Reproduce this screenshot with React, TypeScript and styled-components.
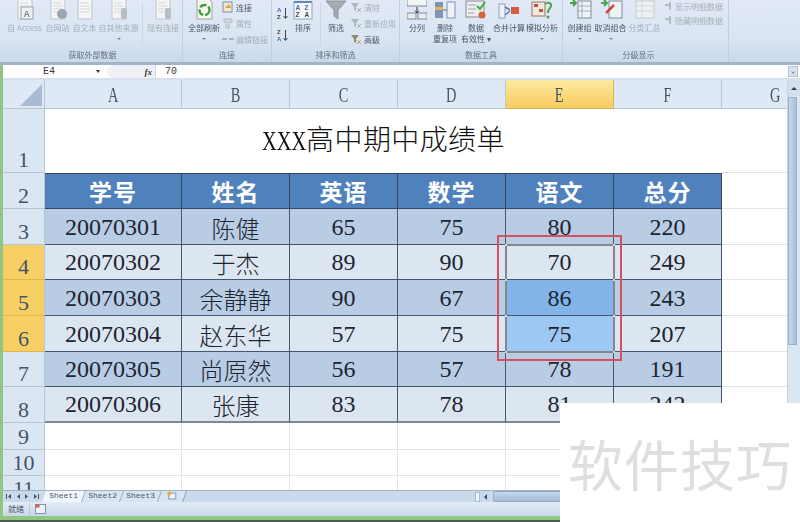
import { Fragment, ReactNode } from 'react';
import styled, { createGlobalStyle } from 'styled-components';

const GlobalStyle = createGlobalStyle`
  html, body {
    margin: 0;
    padding: 0;
    background: #fff;
  }
`;

const UI_FONT = `"Noto Sans CJK SC", "Liberation Sans", sans-serif`;
const CELL_FONT = `"Liberation Serif", "Noto Sans CJK SC", serif`;
const MONO_FONT = `"Liberation Mono", monospace`;

const COLUMNS = ['A', 'B', 'C', 'D', 'E', 'F', 'G'];
const ROW_HEIGHTS = [64, 36, 36, 35, 36, 36, 35, 36, 27, 26, 26];
const HEADINGS = ['学号', '姓名', '英语', '数学', '语文', '总分'];
const STUDENTS = [
  ['20070301', '陈健', '65', '75', '80', '220'],
  ['20070302', '于杰', '89', '90', '70', '249'],
  ['20070303', '余静静', '90', '67', '86', '243'],
  ['20070304', '赵东华', '57', '75', '75', '207'],
  ['20070305', '尚原然', '56', '57', '78', '191'],
  ['20070306', '张康', '83', '78', '81', '242'],
];

type Tone = 'odd' | 'even' | 'picked' | 'pickedLight';

const toneColors: Record<Tone, string> = {
  odd: '#b8cce4',
  even: '#dce6f1',
  picked: '#83b4e8',
  pickedLight: '#9dc8f3',
};

function toneFor(row: number, col: number): Tone {
  if (col === 4 && row === 2) return 'picked';
  if (col === 4 && row === 3) return 'pickedLight';
  return row % 2 === 0 ? 'odd' : 'even';
}

const Page = styled.div`
  position: relative;
  width: 800px;
  height: 522px;
  overflow: hidden;
  display: flex;
  flex-direction: column;
  background: #8fc684;
  font-family: ${UI_FONT};
`;

const Ribbon = styled.div`
  height: 62px;
  display: flex;
  padding-left: 3px;
  background: linear-gradient(#e0e9f5, #dbe5f2 60%, #c9d9ec);
  border-bottom: 3px solid #a3b4c9;
  filter: blur(0.35px);
  flex: none;
`;

const Group = styled.div<{ $width: number }>`
  width: ${(p) => p.$width}px;
  flex: none;
  display: flex;
  flex-direction: column;
  border-right: 1px solid #c0cfe1;
  box-sizing: border-box;
`;

const GroupBody = styled.div`
  height: 50px;
  display: flex;
  align-items: flex-start;
  overflow: hidden;
`;

const GroupLabel = styled.div<{ $shift?: number }>`
  height: 12px;
  line-height: 10px;
  font-size: 8px;
  color: #626e7c;
  text-align: center;
  padding-right: ${(p) => p.$shift ?? 0}px;
`;

const BigButton = styled.div<{ $width: number; $gap?: number; $off?: boolean }>`
  width: ${(p) => p.$width}px;
  margin-left: ${(p) => p.$gap ?? 0}px;
  flex: none;
  display: flex;
  flex-direction: column;
  align-items: center;
  text-align: center;
  font-size: 8px;
  line-height: 11px;
  white-space: nowrap;
  color: ${(p) => (p.$off ? '#a5aeb9' : '#4c5662')};

  svg {
    display: block;
    margin-bottom: 2px;
  }
`;

const Caret = styled.div`
  width: 0;
  height: 0;
  margin-top: 5px;
  border-left: 2px solid transparent;
  border-right: 2px solid transparent;
  border-top: 2px solid #7a8492;
`;

const SmallList = styled.div<{ $gap: number; $left?: number; $top?: number }>`
  display: flex;
  flex-direction: column;
  gap: ${(p) => p.$gap}px;
  margin-left: ${(p) => p.$left ?? 0}px;
  padding-top: ${(p) => p.$top ?? 1}px;
  flex: none;
`;

const SmallItem = styled.div<{ $off?: boolean }>`
  display: flex;
  align-items: center;
  gap: 2px;
  height: 12px;
  font-size: 8px;
  white-space: nowrap;
  color: ${(p) => (p.$off ? '#a5aeb9' : '#4c5662')};
`;

const Divider = styled.div<{ $left: number }>`
  width: 1px;
  height: 44px;
  margin: 2px 0 0 ${(p) => p.$left}px;
  background: #cbd7e6;
  flex: none;
`;

const FormulaBar = styled.div`
  height: 13px;
  display: flex;
  align-items: center;
  background: #fff;
  border-bottom: 2px solid #d7e0ea;
  margin-left: 3px;
  flex: none;
  font-family: ${MONO_FONT};
  font-size: 10px;
  color: #3a3a3a;
`;

const NameBox = styled.div`
  width: 101px;
  padding-left: 40px;
  box-sizing: border-box;
  display: flex;
  justify-content: space-between;
  padding-right: 4px;
  align-items: center;
`;

const DropMark = styled.span`
  width: 0;
  height: 0;
  border-left: 2px solid transparent;
  border-right: 2px solid transparent;
  border-top: 3px solid #333;
`;

const FormulaTools = styled.div`
  width: 49px;
  height: 13px;
  margin-left: 3px;
  display: flex;
  align-items: center;
  justify-content: flex-end;
  padding-right: 3px;
  box-sizing: border-box;
  background: #eef2f7;
  border-radius: 7px 0 0 7px;
  font-family: "Liberation Serif", serif;
  font-style: italic;
  font-weight: 700;
  font-size: 9px;
  border-right: 1px solid #d3dbe5;
`;

const FormulaValue = styled.div`
  flex: 1;
  padding-left: 9px;
`;

const ExpandButton = styled.div`
  width: 10px;
  height: 11px;
  margin-right: 2px;
  background: #d9e3ef;
  border: 1px solid #b4c3d6;
  box-sizing: border-box;
  color: #44546a;
  font-size: 7px;
  line-height: 8px;
  text-align: center;
`;

const Workspace = styled.div`
  flex: 1;
  min-height: 0;
  margin-left: 3px;
  display: flex;
  background: #fff;
`;

const Sheet = styled.div`
  width: 784px;
  flex: none;
  overflow: hidden;
  display: grid;
  grid-template-columns: 42px 137px repeat(6, 108px);
  grid-template-rows: 29px ${ROW_HEIGHTS.map((h) => `${h}px`).join(' ')};
`;

const Corner = styled.div`
  background: #dfe9f5;
  border-right: 1px solid #b6c6d9;
  border-bottom: 1px solid #b6c6d9;
  display: flex;
  align-items: flex-end;
  justify-content: flex-end;
  padding: 0 2px 2px 0;
`;

const ColumnHead = styled.div<{ $active?: boolean }>`
  display: flex;
  align-items: center;
  justify-content: center;
  box-sizing: border-box;
  font-family: ${CELL_FONT};
  font-size: 20px;
  padding-top: 3px;
  color: #44546a;
  background: ${(p) => (p.$active ? 'linear-gradient(#fde9a0, #f9cb5e)' : '#dfe9f5')};
  border-right: 1px solid ${(p) => (p.$active ? '#d8b45c' : '#b6c6d9')};
  border-bottom: 1px solid ${(p) => (p.$active ? '#d8b45c' : '#b6c6d9')};
`;

const ColumnLetter = styled.span`
  display: inline-block;
  transform: scaleX(0.72);
`;

const RowHead = styled.div<{ $active?: boolean }>`
  display: flex;
  align-items: flex-end;
  justify-content: center;
  box-sizing: border-box;
  font-family: ${CELL_FONT};
  font-size: 22px;
  line-height: 24px;
  color: #44546a;
  background: ${(p) => (p.$active ? '#f7cf63' : '#dbe6f3')};
  border-right: 1px solid #b6c6d9;
  border-bottom: 1px solid ${(p) => (p.$active ? '#dcb652' : '#b6c6d9')};
`;

const TitleCell = styled.div`
  grid-column: span 6;
  display: flex;
  align-items: center;
  justify-content: center;
  background: #fff;
  font-family: ${CELL_FONT};
  font-size: 28px;
  font-weight: 300;
  letter-spacing: 0.4px;
  line-height: 1;
  color: #111;
`;

const TitleLatin = styled.span`
  display: inline-block;
  width: 44px;
  transform: scaleX(0.73);
  transform-origin: left center;
  letter-spacing: 0;
`;

const HeadCell = styled.div`
  display: flex;
  align-items: center;
  justify-content: center;
  box-sizing: border-box;
  background: #4f81bd;
  color: #fff;
  font-weight: 700;
  font-size: 23px;
  letter-spacing: 1px;
  border-top: 1px solid #36465c;
  border-right: 1px solid #36465c;
  border-bottom: 1px solid #36465c;
`;

const DataCell = styled.div<{ $tone: Tone; $last?: boolean }>`
  display: flex;
  align-items: center;
  justify-content: center;
  box-sizing: border-box;
  padding-top: 1px;
  background: ${(p) => toneColors[p.$tone]};
  color: #1d2530;
  font-family: ${CELL_FONT};
  font-size: 24px;
  font-weight: 300;
  border-right: 1px solid #46566e;
  border-bottom: ${(p) => (p.$last ? '2px solid #7d8896' : '1px solid #46566e')};
`;

const EmptyCell = styled.div`
  box-sizing: border-box;
  background: #fff;
  border-right: 1px solid #e4e4e4;
  border-bottom: 1px solid #e4e4e4;
`;

const ScrollBar = styled.div`
  flex: 1;
  display: flex;
  flex-direction: column;
  align-items: stretch;
  background: #dbe6f3;
  border-left: 1px solid #c4d2e3;
`;

const ScrollCap = styled.div`
  height: 16px;
  display: flex;
  align-items: center;
  justify-content: center;
  background: #d3dfee;
  flex: none;
`;

const ScrollUp = styled.span`
  width: 0;
  height: 0;
  border-left: 3px solid transparent;
  border-right: 3px solid transparent;
  border-bottom: 3px solid #2f3f55;
`;

const ScrollThumb = styled.div`
  height: 248px;
  margin: 1px 3px 0 0;
  background: linear-gradient(90deg, #c6d7ea, #a9c1dd);
  border: 1px solid #9ab1cc;
  box-sizing: border-box;
  flex: none;
`;

const TabBar = styled.div`
  height: 11px;
  margin-left: 3px;
  display: flex;
  align-items: flex-end;
  background: #c9daec;
  border-top: 1px solid #9fb2c8;
  flex: none;
  font-family: ${MONO_FONT};
  font-size: 8px;
  color: #4c5a6c;
`;

const TabNav = styled.div`
  width: 41px;
  height: 11px;
  padding-left: 3px;
  box-sizing: border-box;
  display: flex;
  align-items: center;
  gap: 3px;
  color: #44546a;
`;

const Tab = styled.div<{ $active?: boolean; $width: number }>`
  width: ${(p) => p.$width}px;
  height: 11px;
  line-height: 10px;
  text-align: center;
  background: ${(p) => (p.$active ? '#f2f6fb' : '#d8e4f1')};
  border-right: 1px solid #8da2bb;
  transform: skewX(-20deg);
`;

const TabLabel = styled.span`
  display: inline-block;
  transform: skewX(20deg);
`;

const TabFill = styled.div`
  flex: 1;
`;

const HScroll = styled.div`
  width: 325px;
  height: 10px;
  display: flex;
  align-items: center;
  gap: 4px;
  align-self: center;
`;

const SplitHandle = styled.div`
  width: 3px;
  height: 8px;
  background: #eef3f9;
  border: 1px solid #a8bbd1;
`;

const LeftArrow = styled.span`
  width: 0;
  height: 0;
  border-top: 3px solid transparent;
  border-bottom: 3px solid transparent;
  border-right: 3px solid #3c4c62;
`;

const HThumb = styled.div`
  flex: 1;
  height: 9px;
  margin-left: 2px;
  background: linear-gradient(#c6d8ec, #a4bcd8);
  border: 1px solid #90a8c4;
  border-radius: 2px;
`;

const StatusBar = styled.div`
  height: 14px;
  margin-left: 3px;
  display: flex;
  align-items: center;
  background: linear-gradient(#e3ecf6, #c9d7e8);
  font-size: 8px;
  color: #4c5a6c;
  flex: none;
`;

const StatusText = styled.span`
  width: 27px;
  padding-left: 5px;
  box-sizing: border-box;
  border-right: 1px solid #b9c8da;
  line-height: 12px;
`;

const StatusIcon = styled.span`
  margin-left: 5px;
  display: flex;
`;

const WindowEdge = styled.div`
  height: 4px;
  background: #8fc684;
  border-bottom: 2px solid #4f5a4e;
  flex: none;
`;

const RedFrame = styled.div`
  position: absolute;
  left: 497px;
  top: 235px;
  width: 125px;
  height: 126px;
  box-sizing: border-box;
  border: 2px solid #d8505f;
`;

const SelectionFrame = styled.div`
  position: absolute;
  left: 505px;
  top: 244px;
  width: 110px;
  height: 109px;
  box-sizing: border-box;
  border: 2px solid #83888e;
`;

const Handle = styled.div<{ $x: 'left' | 'right'; $y: number }>`
  position: absolute;
  ${(p) => p.$x}: -2px;
  top: ${(p) => p.$y}px;
  width: 2px;
  height: 2px;
  background: #d9dde1;
`;

const Watermark = styled.div`
  position: absolute;
  left: 560px;
  top: 403px;
  width: 240px;
  height: 119px;
  background: #fff;
  display: flex;
  justify-content: center;
  padding-top: 24px;
  box-sizing: border-box;
  font-size: 55px;
  line-height: 70px;
  letter-spacing: 1px;
  color: #dfdfdf;
`;

const Svg = ({ w = 20, h = 20, children }: { w?: number; h?: number; children: ReactNode }) => (
  <svg width={w} height={h} viewBox={`0 0 ${w} ${h}`} fill="none">
    {children}
  </svg>
);

const PageShape = ({ stroke = '#bcc5ce' }: { stroke?: string }) => (
  <>
    <path d="M3 -4H13L17 0V19H3Z" fill="#f4f5f4" stroke={stroke} />
    <path d="M5 3H13M5 6H15M5 9H15M5 12H15" stroke="#d5d9da" />
  </>
);

const DataPage = ({ badge }: { badge?: ReactNode }) => (
  <Svg>
    <PageShape />
    {badge}
  </Svg>
);

const SortIcon = ({ up }: { up?: boolean }) => (
  <Svg w={13} h={14}>
    <text x="1" y="6" fontSize="6" fontFamily="Liberation Sans" fontWeight="700" fill={up ? '#3c69a8' : '#444'}>
      {up ? 'A' : 'Z'}
    </text>
    <text x="1" y="13" fontSize="6" fontFamily="Liberation Sans" fontWeight="700" fill={up ? '#444' : '#3c69a8'}>
      {up ? 'Z' : 'A'}
    </text>
    <path d="M9.5 2V12M7.5 10L9.5 12.5L11.5 10" stroke="#3b4652" />
  </Svg>
);

const SmallFunnel = ({ color = '#aeb6bf', mark }: { color?: string; mark?: string }) => (
  <Svg w={12} h={12}>
    <path d="M1 2H9L6 6V10L4 9V6Z" fill={color} />
    {mark && <path d="M7 7L11 11M11 7L7 11" stroke={mark} />}
  </Svg>
);

const NavIcon = ({ dir, stop }: { dir: 'left' | 'right'; stop?: boolean }) => (
  <Svg w={6} h={7}>
    <path d={dir === 'left' ? 'M5 1V6L2 3.5Z' : 'M1 1V6L4 3.5Z'} fill="#44546a" />
    {stop && <path d={dir === 'left' ? 'M0.5 1V6' : 'M5.5 1V6'} stroke="#44546a" />}
  </Svg>
);

const App = () => (
  <>
    <GlobalStyle />
    <Page>
      <Ribbon>
        <Group $width={180}>
          <GroupBody>
            <BigButton $width={35} $gap={4} $off>
              <DataPage
                badge={
                  <>
                    <rect x="6" y="7" width="12" height="12" fill="#eef1f3" stroke="#9aa4ae" />
                    <text x="8.5" y="17" fontSize="9" fontFamily="Liberation Sans" fontWeight="700" fill="#7d8894">
                      A
                    </text>
                  </>
                }
              />
              自 Access
            </BigButton>
            <BigButton $width={25} $gap={3} $off>
              <DataPage badge={<circle cx="14" cy="14" r="5" fill="#9aa6b3" />} />
              自网站
            </BigButton>
            <BigButton $width={25} $gap={2} $off>
              <DataPage />
              自文本
            </BigButton>
            <BigButton $width={39} $gap={2} $off>
              <DataPage badge={<rect x="12" y="8" width="6" height="11" rx="2" fill="#b6bfc9" />} />
              自其他来源
              <Caret />
            </BigButton>
            <Divider $left={4} />
            <BigButton $width={32} $gap={4} $off>
              <DataPage badge={<rect x="12" y="8" width="6" height="11" rx="2" fill="#b6bfc9" />} />
              现有连接
            </BigButton>
          </GroupBody>
          <GroupLabel>获取外部数据</GroupLabel>
        </Group>
        <Group $width={89}>
          <GroupBody>
            <BigButton $width={32} $gap={5}>
              <Svg w={22} h={20}>
                <path d="M4 -2H15L19 2V19H4Z" fill="#f6f7ef" stroke="#9ea79c" />
                <circle cx="11.5" cy="10" r="5" stroke="#3f9d3c" strokeWidth="2.4" strokeDasharray="7 2" />
              </Svg>
              全部刷新
              <Caret />
            </BigButton>
            <SmallList $gap={4} $left={2}>
              <SmallItem>
                <Svg w={12} h={12}>
                  <rect x="1" y="1" width="9" height="10" fill="#f1e9cf" stroke="#7e8fa8" />
                  <path d="M3 7L7 3L9 7Z" fill="#d8a83e" />
                </Svg>
                连接
              </SmallItem>
              <SmallItem $off>
                <Svg w={12} h={12}>
                  <path d="M2 2H10V5H7V11H4V5H2Z" fill="#d5dadf" stroke="#b3bbc4" />
                </Svg>
                属性
              </SmallItem>
              <SmallItem $off>
                <Svg w={12} h={12}>
                  <path d="M0 6H5M7 6H12" stroke="#aab3bd" strokeWidth="2" />
                </Svg>
                编辑链接
              </SmallItem>
            </SmallList>
          </GroupBody>
          <GroupLabel>连接</GroupLabel>
        </Group>
        <Group $width={128}>
          <GroupBody>
            <SmallList $gap={8} $left={4} $top={6}>
              <SortIcon up />
              <SortIcon />
            </SmallList>
            <BigButton $width={22} $gap={3}>
              <Svg w={20} h={20}>
                <rect x="1" y="2" width="18" height="17" fill="#f7f8fb" stroke="#8fa3bd" />
                <rect x="1" y="1" width="18" height="2" fill="#5f87bb" />
                <text x="2.5" y="10" fontSize="6.5" fontFamily="Liberation Sans" fontWeight="700" fill="#3c69a8">A</text>
                <text x="11.5" y="10" fontSize="6.5" fontFamily="Liberation Sans" fontWeight="700" fill="#3c69a8">Z</text>
                <text x="2.5" y="17" fontSize="6.5" fontFamily="Liberation Sans" fontWeight="700" fill="#444">Z</text>
                <text x="11.5" y="17" fontSize="6.5" fontFamily="Liberation Sans" fontWeight="700" fill="#444">A</text>
              </Svg>
              排序
            </BigButton>
            <Divider $left={6} />
            <BigButton $width={22} $gap={4}>
              <Svg w={20} h={20}>
                <path d="M0 1H20L12 10V19L8 16V10Z" fill="#a5abb0" stroke="#8f969c" />
              </Svg>
              筛选
            </BigButton>
            <SmallList $gap={4} $left={3}>
              <SmallItem $off>
                <SmallFunnel mark="#b8a8a8" />
                清除
              </SmallItem>
              <SmallItem $off>
                <SmallFunnel mark="#a8c0a8" />
                重新应用
              </SmallItem>
              <SmallItem>
                <SmallFunnel color="#8c8f6a" mark="#d3a33d" />
                高级
              </SmallItem>
            </SmallList>
          </GroupBody>
          <GroupLabel>排序和筛选</GroupLabel>
        </Group>
        <Group $width={163}>
          <GroupBody>
            <BigButton $width={22} $gap={6}>
              <Svg w={20} h={20}>
                <rect x="0" y="-2" width="20" height="8" fill="#f2f4f6" stroke="#7f8a96" />
                <rect x="0" y="13" width="9" height="6" fill="#e8eaec" stroke="#7f8a96" />
                <rect x="11" y="13" width="9" height="6" fill="#e8eaec" stroke="#7f8a96" />
                <path d="M10 7V13M8 10.5L10 13L12 10.5" stroke="#333" />
              </Svg>
              分列
            </BigButton>
            <BigButton $width={26} $gap={4}>
              <Svg w={22} h={20}>
                <rect x="1" y="2" width="8" height="16" fill="#7d95b8" />
                <rect x="1" y="7" width="8" height="3" fill="#e0b44f" />
                <rect x="13" y="2" width="8" height="16" fill="#eef1f5" stroke="#7d95b8" />
                <path d="M9 10H13" stroke="#4c6c97" />
              </Svg>
              删除
              <br />
              重复项
            </BigButton>
            <BigButton $width={28} $gap={4}>
              <Svg w={22} h={20}>
                <rect x="1" y="1" width="18" height="16" fill="#eceeef" stroke="#868e96" />
                <path d="M3 5H11M3 9H11M3 13H9" stroke="#9ca5ae" />
                <path d="M12 6L15 9L20 2" stroke="#46a245" strokeWidth="2" />
                <circle cx="17" cy="15" r="3.5" fill="#d9623c" />
              </Svg>
              数据
              <br />
              有效性 ▾
            </BigButton>
            <BigButton $width={32} $gap={3}>
              <Svg w={22} h={20}>
                <rect x="1" y="4" width="6" height="14" fill="#eef1f5" stroke="#8fa0b5" />
                <rect x="13" y="7" width="8" height="7" fill="#db5a3f" />
                <path d="M7 7L12 10M7 15L12 11" stroke="#4d82c0" strokeWidth="1.5" />
              </Svg>
              合并计算
            </BigButton>
            <BigButton $width={32} $gap={1}>
              <Svg w={22} h={20}>
                <rect x="1" y="2" width="13" height="14" fill="#efe8df" stroke="#a1705c" />
                <rect x="3" y="4" width="4" height="3" fill="#c84d3a" />
                <rect x="8" y="9" width="4" height="3" fill="#c84d3a" />
                <path d="M14 4C18 1 22 4 19 8C17 10 17 11 17 13" stroke="#54a34e" strokeWidth="2" />
                <circle cx="17" cy="17" r="1.5" fill="#54a34e" />
              </Svg>
              模拟分析
              <Caret />
            </BigButton>
          </GroupBody>
          <GroupLabel>数据工具</GroupLabel>
        </Group>
        <Group $width={166}>
          <GroupBody>
            <BigButton $width={25} $gap={4}>
              <Svg w={24} h={20}>
                <rect x="10" y="1" width="13" height="17" fill="#f0f3f6" stroke="#7f8b99" />
                <path d="M14 1V18M10 6H23M10 11H23" stroke="#a4aeba" />
                <path d="M2 3H7M5 0L8 3L5 6" stroke="#4fa349" strokeWidth="2" />
              </Svg>
              创建组
              <Caret />
            </BigButton>
            <BigButton $width={31} $gap={3}>
              <Svg w={24} h={20}>
                <rect x="10" y="1" width="13" height="17" fill="#f0f3f6" stroke="#7f8b99" />
                <path d="M7 13L15 5" stroke="#cf4b3c" strokeWidth="2.5" />
                <path d="M2 3H7M5 0L8 3L5 6" stroke="#4fa349" strokeWidth="2" />
              </Svg>
              取消组合
              <Caret />
            </BigButton>
            <BigButton $width={31} $gap={3} $off>
              <Svg w={22} h={20}>
                <rect x="2" y="1" width="18" height="17" fill="#eef1f3" stroke="#c2c9d0" />
                <path d="M8 1V18M2 6H20M2 11H20" stroke="#d2d7dc" />
              </Svg>
              分类汇总
            </BigButton>
            <SmallList $gap={2} $left={4} $top={0}>
              <SmallItem $off>
                <Svg w={9} h={12}>
                  <path d="M1 5H5M6 2V10" stroke="#b3bcc6" strokeWidth="2" />
                </Svg>
                显示明细数据
              </SmallItem>
              <SmallItem $off>
                <Svg w={9} h={12}>
                  <path d="M1 5H5M6 2V10" stroke="#b3bcc6" strokeWidth="2" />
                </Svg>
                隐藏明细数据
              </SmallItem>
            </SmallList>
          </GroupBody>
          <GroupLabel $shift={14}>分级显示</GroupLabel>
        </Group>
      </Ribbon>

      <FormulaBar>
        <NameBox>
          E4
          <DropMark />
        </NameBox>
        <FormulaTools>fx</FormulaTools>
        <FormulaValue>70</FormulaValue>
        <ExpandButton>⌄</ExpandButton>
      </FormulaBar>

      <Workspace>
        <Sheet>
          <Corner>
            <Svg w={22} h={22}>
              <path d="M22 0V22H0Z" fill="#a9bbd2" />
            </Svg>
          </Corner>
          {COLUMNS.map((col) => (
            <ColumnHead key={col} $active={col === 'E'}>
              <ColumnLetter>{col}</ColumnLetter>
            </ColumnHead>
          ))}

          <RowHead>1</RowHead>
          <TitleCell>
            <TitleLatin>XXX</TitleLatin>高中期中成绩单
          </TitleCell>
          <EmptyCell />

          <RowHead>2</RowHead>
          {HEADINGS.map((text) => (
            <HeadCell key={text}>{text}</HeadCell>
          ))}
          <EmptyCell />

          {STUDENTS.map((student, row) => (
            <Fragment key={student[0]}>
              <RowHead $active={row >= 1 && row <= 3}>{row + 3}</RowHead>
              {student.map((value, col) => (
                <DataCell key={col} $tone={toneFor(row, col)} $last={row === 5}>
                  {value}
                </DataCell>
              ))}
              <EmptyCell />
            </Fragment>
          ))}

          {[9, 10, 11].map((num) => (
            <Fragment key={num}>
              <RowHead>{num}</RowHead>
              {COLUMNS.map((col) => (
                <EmptyCell key={col} />
              ))}
            </Fragment>
          ))}
        </Sheet>
        <ScrollBar>
          <ScrollCap>
            <ScrollUp />
          </ScrollCap>
          <ScrollThumb />
        </ScrollBar>
      </Workspace>

      <TabBar>
        <TabNav>
          <NavIcon dir="left" stop />
          <NavIcon dir="left" />
          <NavIcon dir="right" />
          <NavIcon dir="right" stop />
        </TabNav>
        <Tab $active $width={39}>
          <TabLabel>Sheet1</TabLabel>
        </Tab>
        <Tab $width={37}>
          <TabLabel>Sheet2</TabLabel>
        </Tab>
        <Tab $width={37}>
          <TabLabel>Sheet3</TabLabel>
        </Tab>
        <Tab $width={24}>
          <TabLabel>
            <Svg w={10} h={9}>
              <rect x="2" y="2" width="7" height="6" fill="#eef3f9" stroke="#7d95b3" />
              <circle cx="2.5" cy="2.5" r="2" fill="#e5a83f" />
            </Svg>
          </TabLabel>
        </Tab>
        <TabFill />
        <HScroll>
          <SplitHandle />
          <LeftArrow />
          <HThumb />
        </HScroll>
      </TabBar>

      <StatusBar>
        <StatusText>就绪</StatusText>
        <StatusIcon>
          <Svg w={11} h={10}>
            <rect x="0.5" y="0.5" width="10" height="9" fill="#eef3f9" stroke="#7d95b3" />
            <rect x="0.5" y="0.5" width="4" height="3" fill="#d9623c" />
          </Svg>
        </StatusIcon>
      </StatusBar>
      <WindowEdge />

      <RedFrame />
      <SelectionFrame>
        <Handle $x="left" $y={-2} />
        <Handle $x="right" $y={-2} />
        <Handle $x="left" $y={33} />
        <Handle $x="right" $y={33} />
        <Handle $x="left" $y={69} />
        <Handle $x="right" $y={69} />
        <Handle $x="left" $y={105} />
        <Handle $x="right" $y={105} />
      </SelectionFrame>
      <Watermark>软件技巧</Watermark>
    </Page>
  </>
);

export default App;
